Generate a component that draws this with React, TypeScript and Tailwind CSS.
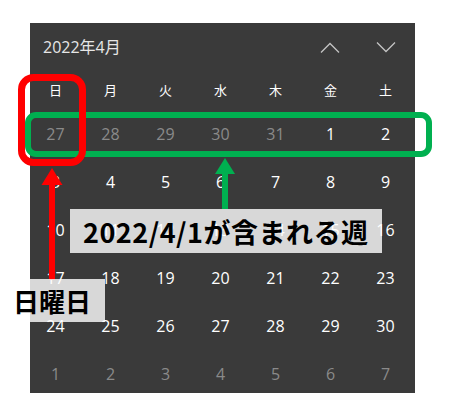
const weekdays = ['日', '月', '火', '水', '木', '金', '土'];

const weeks: { d: number; dim?: boolean }[][] = [
  [{ d: 27, dim: true }, { d: 28, dim: true }, { d: 29, dim: true }, { d: 30, dim: true }, { d: 31, dim: true }, { d: 1 }, { d: 2 }],
  [{ d: 3 }, { d: 4 }, { d: 5 }, { d: 6 }, { d: 7 }, { d: 8 }, { d: 9 }],
  [{ d: 10 }, { d: 11 }, { d: 12 }, { d: 13 }, { d: 14 }, { d: 15 }, { d: 16 }],
  [{ d: 17 }, { d: 18 }, { d: 19 }, { d: 20 }, { d: 21 }, { d: 22 }, { d: 23 }],
  [{ d: 24 }, { d: 25 }, { d: 26 }, { d: 27 }, { d: 28 }, { d: 29 }, { d: 30 }],
  [{ d: 1, dim: true }, { d: 2, dim: true }, { d: 3, dim: true }, { d: 4, dim: true }, { d: 5, dim: true }, { d: 6, dim: true }, { d: 7, dim: true }],
];

const Chevron = ({ up }: { up?: boolean }) => (
  <svg width="20" height="11" viewBox="0 0 20 11" fill="none">
    <path
      d={up ? 'M1 10.5L10 1.5L19 10.5' : 'M1 0.5L10 9.5L19 0.5'}
      stroke="#c4c4c4"
      strokeWidth="1.3"
    />
  </svg>
);

const Calendar = () => (
  <div className="w-[385px] h-[370px] bg-[#3a3a3a] overflow-hidden font-['Open_Sans','Noto_Sans_CJK_JP',sans-serif]">
    <div className="h-[48px] flex items-center justify-between pl-[13px] pr-[19px]">
      <p className="text-[16px] text-[#e6e6e6] leading-none">2022年4月</p>
      <div className="flex items-center gap-[36px]">
        <Chevron up />
        <Chevron />
      </div>
    </div>
    <div className="-ml-0.5 grid grid-cols-[repeat(7,55px)] h-[39px] items-center">
      {weekdays.map((w) => (
        <span key={w} className="text-center text-[13px] text-white">
          {w}
        </span>
      ))}
    </div>
    {weeks.map((week, i) => (
      <div key={i} className="-ml-0.5 grid grid-cols-[repeat(7,55px)] h-[48px] items-center">
        {week.map((c, j) => (
          <span
            key={j}
            className={`text-center text-[16px] ${c.dim ? 'text-[#8a8a8a]' : 'text-white'}`}
          >
            {c.d}
          </span>
        ))}
      </div>
    ))}
  </div>
);

const Annotations = () => (
  <svg className="absolute inset-0 pointer-events-none" width="451" height="419" viewBox="0 0 451 419">
    <rect x="28" y="115" width="401" height="39" rx="8" fill="none" stroke="#00b050" strokeWidth="6" />
    <rect x="21.5" y="77.5" width="61" height="85" rx="12" fill="none" stroke="#ff0000" strokeWidth="7" />
    <path d="M52 168L62.5 185H41.5Z" fill="#ff0000" />
    <rect x="49" y="184" width="6" height="96" fill="#ff0000" />
    <path d="M225 158L235 174H215Z" fill="#00b050" />
    <rect x="222" y="173" width="6" height="36" fill="#00b050" />
  </svg>
);

export default function App() {
  return (
    <div className="relative w-[451px] h-[419px] bg-white overflow-hidden">
      <div className="pt-[23px] pl-[30px]">
        <Calendar />
      </div>
      <Annotations />
      <div className="absolute left-[70px] top-[209px] w-[312px] h-[44px] bg-white/80 flex items-center pl-[13px]">
        <span className="text-[27px] tracking-[0.5px] font-bold text-black leading-none font-['Noto_Sans_CJK_JP',sans-serif]">
          2022/4/1が含まれる週
        </span>
      </div>
      <div className="absolute left-0 top-[279px] w-[105px] h-[43px] bg-white/80 flex items-center pl-[13px]">
        <span className="text-[26px] font-bold text-black leading-none font-['Noto_Sans_CJK_JP',sans-serif]">
          日曜日
        </span>
      </div>
    </div>
  );
}
